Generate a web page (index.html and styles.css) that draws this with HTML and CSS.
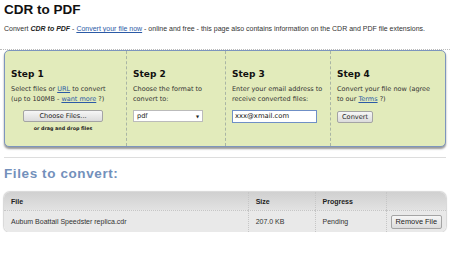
FILE: index.html
```html
<!DOCTYPE html>
<html lang="en">
<head>
  <meta charset="UTF-8" />
  <title>CDR to PDF</title>
  <link rel="stylesheet" href="styles.css">
</head>
<body>
  <h1>CDR to PDF</h1>
  <p class="intro">Convert <b><i>CDR to PDF</i></b> - <a href="#">Convert your file now</a> - online and free - this page also contains information on the CDR and PDF file extensions.</p>

  <div class="dots"></div>
  <div class="steps">
    <div class="step">
      <h2>Step 1</h2>
      <p>Select files or <a href="#">URL</a> to convert<br>(up to 100MB - <a href="#">want more</a> ?)</p>
      <div class="choose">
        <button class="btn wide">Choose Files...</button>
        <div class="drag">or drag and drop files</div>
      </div>
    </div>
    <div class="step">
      <h2>Step 2</h2>
      <p>Choose the format to<br>convert to:</p>
      <div class="select"><span>pdf</span><span class="arrow">&#9660;</span></div>
    </div>
    <div class="step">
      <h2>Step 3</h2>
      <p>Enter your email address to<br>receive converted files:</p>
      <div class="email">xxx@xmail.com</div>
    </div>
    <div class="step">
      <h2>Step 4</h2>
      <p>Convert your file now (agree<br>to our <a href="#">Terms</a> ?)</p>
      <button class="btn">Convert</button>
    </div>
  </div>

  <hr class="rule">
  <h3>Files to convert:</h3>

  <table class="files">
    <thead>
      <tr>
        <th class="c-file">File</th>
        <th class="c-size">Size</th>
        <th class="c-prog">Progress</th>
        <th class="c-act"></th>
      </tr>
    </thead>
    <tbody>
      <tr>
        <td>Aubum Boattail Speedster replica.cdr</td>
        <td>207.0 KB</td>
        <td>Pending</td>
        <td class="act"><button class="btn">Remove File</button></td>
      </tr>
    </tbody>
  </table>
</body>
</html>
```

FILE: styles.css
```css
body {
  margin: 0;
  padding: 0 4px;
  background: #fff;
  color: #333;
  font-family: "Liberation Sans", Arial, sans-serif;
}
h1 {
  margin: 0;
  padding-top: 1px;
  font-size: 13.5px;
  line-height: 18px;
  color: #111;
}
.intro {
  margin: 5px 0 0;
  font-size: 7px;
  line-height: 10px;
  color: #333;
}
.intro b {
  color: #222;
}
a {
  color: #2b5aa6;
}
.dots {
  margin: 15px -4px 0;
  border-top: 1px dotted #bbb;
}
.steps {
  display: flex;
  height: 95px;
  background: #e2ebbb;
  border: 1px solid #7d95bd;
  border-radius: 5px;
  box-shadow: 0 2px 2px #999;
  font-family: "DejaVu Sans", Verdana, sans-serif;
}
.step {
  padding: 17px 0 0 6px;
  border-left: 1px dashed #a9b5a4;
}
.step:first-child {
  border-left: none;
  width: 115px;
}
.step:nth-child(2) {
  width: 92px;
}
.step:nth-child(3) {
  width: 98px;
}
.step:nth-child(4) {
  flex: 1;
}
.step h2 {
  margin: 0;
  font-size: 9px;
  line-height: 12px;
  color: #111;
}
.step p {
  margin: 4px 0 0;
  font-size: 6.5px;
  line-height: 10px;
  color: #333;
}
.btn {
  font-family: "DejaVu Sans", Verdana, sans-serif;
  font-size: 6.6px;
  height: 12px;
  padding: 0 4px;
  margin-top: 6px;
  color: #222;
  white-space: nowrap;
  background: linear-gradient(#f6f6f6, #dcdcdc);
  border: 1px solid #a4a4a4;
  border-radius: 2px;
}
.choose {
  width: 104px;
  text-align: center;
}
.btn.wide {
  width: 80px;
  margin-left: 12px;
  display: block;
}
.drag {
  margin-top: 4px;
  font-size: 4.8px;
  font-weight: bold;
  color: #222;
}
.select {
  display: flex;
  justify-content: space-between;
  align-items: center;
  width: 62px;
  height: 10px;
  margin-top: 6px;
  padding: 0 3px;
  background: #fff;
  border: 1px solid #bbb;
  font-size: 6.6px;
  color: #222;
}
.select .arrow {
  font-size: 4px;
}
.email {
  width: 79px;
  height: 11px;
  margin-top: 6px;
  padding: 0 2px;
  background: #fff;
  border: 1px solid #6f8fc6;
  font-size: 6.8px;
  line-height: 11px;
  color: #111;
}
.rule {
  margin: 10px 0 0;
  border: none;
  border-top: 1px solid #ddd;
}
h3 {
  margin: 8px 0 0;
  font-size: 13.5px;
  letter-spacing: 0.6px;
  line-height: 16px;
  color: #7390bb;
}
.files {
  width: 100%;
  margin-top: 10px;
  border-collapse: separate;
  border-spacing: 0;
  border-radius: 6px;
  box-shadow: 0 0 1px 1px #d6d6d6;
  font-size: 7px;
  color: #333;
}
.files th {
  height: 18px;
  text-align: left;
  padding: 0 7px;
  background: linear-gradient(#d0d0d0, #e2e2e2);
  color: #222;
}
.files th:first-child {
  border-top-left-radius: 6px;
}
.files th:last-child {
  border-top-right-radius: 6px;
}
.files td {
  height: 21px;
  padding: 0 7px;
  background: #e9e9e9;
  border-top: 1px dotted #c6c6c6;
}
.files td:first-child {
  border-bottom-left-radius: 6px;
}
.files td:last-child {
  border-bottom-right-radius: 6px;
}
.files th + th,
.files td + td {
  border-left: 1px dotted #c6c6c6;
}
.c-file {
  width: 230px;
}
.c-size {
  width: 52px;
}
.c-prog {
  width: 56px;
}
.files td.act {
  text-align: right;
  padding: 0 4px;
}
.files td.act .btn {
  margin-top: 0;
  height: 14px;
  font-family: "Liberation Sans", Arial, sans-serif;
  font-size: 7.4px;
}
```
